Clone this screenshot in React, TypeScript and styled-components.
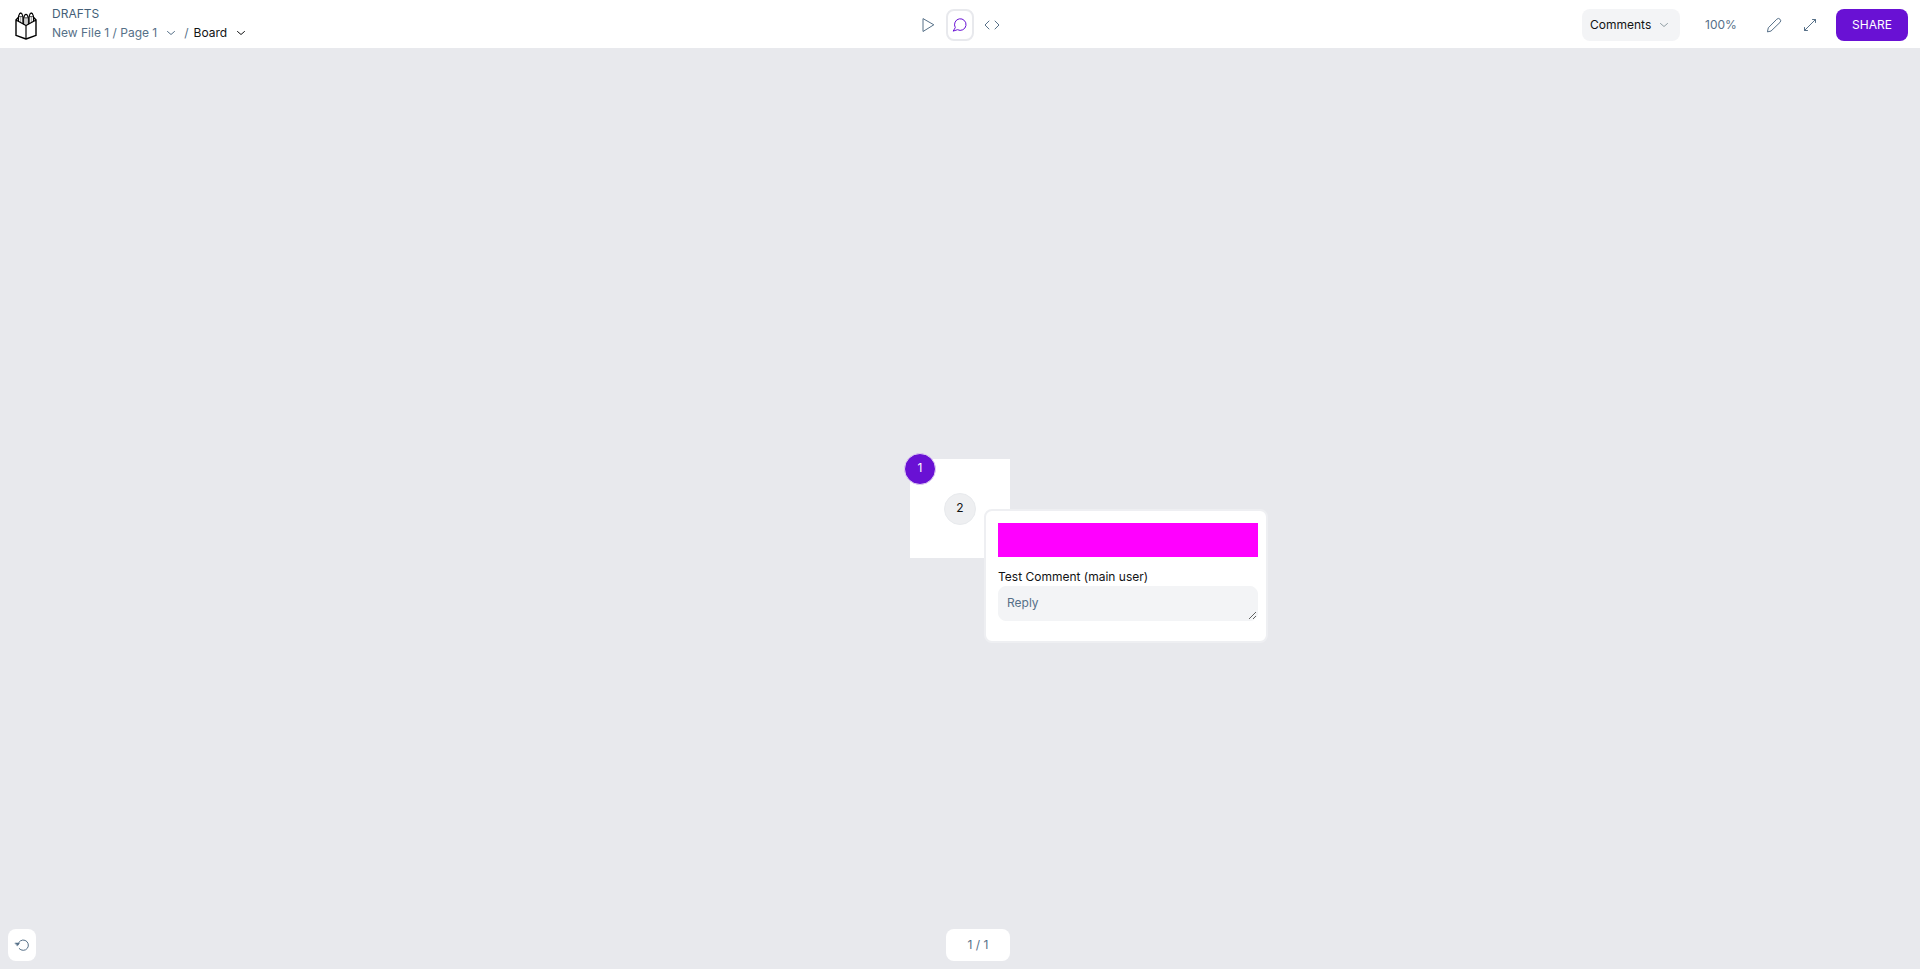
import React from "react";
import styled, { createGlobalStyle, css } from "styled-components";

const color = {
  accent: "#6911d4",
  canvas: "#e8e9ed",
  field: "#f3f4f6",
  line: "#eeeff2",
  text: "#121314",
  muted: "#567088",
};

const GlobalStyle = createGlobalStyle`
  *, *::before, *::after { box-sizing: border-box; }
  body {
    margin: 0;
    font-family: Inter, "Liberation Sans", sans-serif;
    font-size: 12px;
    line-height: 16px;
    color: ${color.text};
  }
  button, select, textarea { font: inherit; color: inherit; margin: 0; }
  button { border: 0; padding: 0; background: none; cursor: pointer; }
`;

const Viewer = styled.div`
  display: flex;
  flex-direction: column;
  min-height: 100vh;
  background: ${color.canvas};
`;

const Header = styled.header`
  display: grid;
  grid-template-columns: 1fr auto 1fr;
  align-items: center;
  min-height: 48px;
  padding: 0 12px;
  background: #fff;
`;

const FileInfo = styled.div`
  display: flex;
  align-items: center;
  gap: 14px;
  padding-left: 2px;
`;

const HomeLink = styled.a`
  display: flex;
  padding-top: 2px;
  color: #000;
`;

const Titles = styled.div`
  display: flex;
  flex-direction: column;
  gap: 3px;
  padding-bottom: 2px;
  color: ${color.muted};
`;

const Project = styled.span`
  color: #445f78;
`;

const Breadcrumb = styled.nav`
  display: flex;
  align-items: center;
  gap: 8px;
`;

const Crumb = styled.button<{ $current?: boolean }>`
  display: flex;
  align-items: center;
  gap: 9px;
  white-space: nowrap;
  color: ${(p) => (p.$current ? color.text : color.muted)};
`;

const CurrentCrumb = styled.div`
  display: flex;
  gap: 5px;
`;

const Modes = styled.div`
  display: flex;
  gap: 4px;
  padding-top: 2px;
`;

const IconButton = styled.button<{ $active?: boolean; $filled?: boolean }>`
  display: flex;
  align-items: center;
  justify-content: center;
  width: 28px;
  height: 32px;
  border: 2px solid transparent;
  border-radius: 8px;
  color: ${color.muted};
  ${(p) => p.$active && css`
    border-color: ${color.canvas};
    color: ${color.accent};
  `}
  ${(p) => p.$filled && css`
    background: #fff;
  `}
`;

const Options = styled.div`
  display: flex;
  align-items: center;
  justify-content: flex-end;
  padding-top: 2px;
`;

const SelectBox = styled.div`
  display: grid;
  align-items: center;
  width: 98px;
  height: 32px;
  color: #8f9da3;
  > * { grid-area: 1 / 1; }
  svg { justify-self: end; margin-right: 11px; pointer-events: none; }
`;

const Select = styled.select`
  appearance: none;
  width: 100%;
  height: 32px;
  padding: 0 24px 0 8px;
  border: 0;
  border-radius: 8px;
  background: ${color.field};
  color: ${color.text};
`;

const Zoom = styled.button`
  width: 80px;
  height: 32px;
  padding-left: 2px;
  color: ${color.muted};
`;

const Tools = styled.div`
  display: flex;
  gap: 8px;
  margin-right: 12px;
`;

const ShareButton = styled.button`
  width: 72px;
  height: 32px;
  border-radius: 8px;
  background: ${color.accent};
  color: #fff;
`;

const Canvas = styled.main`
  position: relative;
  flex: 1;
  display: flex;
  align-items: center;
  justify-content: center;
`;

const Board = styled.section`
  position: relative;
  width: 100px;
  height: 99px;
  background: #fff;
`;

const Bubble = styled.button<{ $x: number; $y: number; $unread?: boolean }>`
  position: absolute;
  left: ${(p) => p.$x}px;
  top: ${(p) => p.$y}px;
  width: 32px;
  height: 32px;
  transform: translate(-50%, -50%);
  border: 1px solid ${(p) => (p.$unread ? "#e1d2f3" : "#e8eaed")};
  border-radius: 50%;
  background: ${(p) => (p.$unread ? color.accent : "#eeeff1")};
  color: ${(p) => (p.$unread ? "#fff" : color.text)};
  padding-bottom: 2px;
`;

const Thread = styled.article`
  position: absolute;
  left: 74px;
  top: 50px;
  width: 284px;
  padding: 12px 8px 20px 12px;
  border: 2px solid ${color.line};
  border-radius: 8px;
  background: #fff;
`;

const Author = styled.div`
  height: 34px;
  background: #f0f;
`;

const Message = styled.p`
  margin: 12px 0 1px;
  white-space: nowrap;
`;

const Reply = styled.textarea`
  display: block;
  width: 100%;
  height: 35px;
  padding: 8px;
  border: 1px solid ${color.field};
  border-radius: 8px;
  background: ${color.field};
  resize: vertical;
  &::placeholder { color: ${color.muted}; opacity: 1; }
`;

const ResetSlot = styled.div`
  position: absolute;
  left: 8px;
  bottom: 8px;
`;

const Pager = styled.div`
  position: absolute;
  left: calc(50% - 14px);
  bottom: 8px;
  display: flex;
  align-items: center;
  justify-content: center;
  width: 64px;
  height: 32px;
  border-radius: 8px;
  background: #fff;
  color: ${color.muted};
`;

const Icon = ({ children, size = 16 }: { children: React.ReactNode; size?: number }) => (
  <svg width={size} height={size} viewBox={`0 0 ${size} ${size}`} fill="none" stroke="currentColor" strokeLinecap="round" strokeLinejoin="round" aria-hidden="true">
    {children}
  </svg>
);

const Chevron = () => (
  <Icon size={10}><path d="M1.500 3.500 5 6.500l3.500-3" /></Icon>
);

const Logo = () => (
  <svg width="24" height="30" viewBox="0 0 24 30" fill="none" stroke="currentColor" strokeWidth="1.400" strokeLinejoin="round" aria-hidden="true">
    <path d="M2 10v15.400L12 29l10-3.600V10l-10 5.500z" />
    <path d="M12 15.500V29" strokeWidth="1.200" />
    <path d="M2 10l2.300-2.500M22 10l-2.300-2.500" />
    <path d="M4.500 11.500V6.200l1.300-2.900h1.800l1.300 2.900v7.600M15.100 13.800V6.200l1.300-2.900h1.800l1.300 2.900v5.300" strokeWidth="1.100" />
    <path d="M9.700 14.200V7.400l1.400-2.900h1.800l1.400 2.900v6.800" strokeWidth="1.100" />
    <path d="M4.500 6.600h4.400M15.100 6.600h4.400M9.700 7.800h4.600" strokeWidth="0.700" />
    <path d="M6.700 7v5M17.300 7v5M12 8v6" strokeWidth="0.400" />
    <path d="M6.200 3.300h1M11.500 4.500h1M16.800 3.300h1" strokeWidth="1.600" />
  </svg>
);

export default function App() {
  return (
    <>
      <GlobalStyle />
      <Viewer>
        <Header>
          <FileInfo>
            <HomeLink href="#" aria-label="Dashboard"><Logo /></HomeLink>
            <Titles>
              <Project>DRAFTS</Project>
              <Breadcrumb aria-label="File">
                <Crumb>New File 1 / Page 1 <Chevron /></Crumb>
                <CurrentCrumb>
                  <span>/</span>
                  <Crumb $current>Board <Chevron /></Crumb>
                </CurrentCrumb>
              </Breadcrumb>
            </Titles>
          </FileInfo>
          <Modes>
            <IconButton aria-label="Play">
              <Icon><path d="M3 2v12.500L13.500 8z" /></Icon>
            </IconButton>
            <IconButton $active aria-label="Comments" aria-pressed="true">
              <Icon><path d="M3.100 10.300A5.800 5.800 0 1 1 5.500 12.700L1.500 14z" /></Icon>
            </IconButton>
            <IconButton aria-label="Inspect code">
              <Icon><path d="M5 4 1 8l4 4M11 4l4 4-4 4" /></Icon>
            </IconButton>
          </Modes>
          <Options>
            <SelectBox>
              <Select aria-label="Comments filter"><option>Comments</option></Select>
              <Chevron />
            </SelectBox>
            <Zoom>100%</Zoom>
            <Tools>
              <IconButton aria-label="Edit">
                <Icon><path d="M1.500 14.500 2.300 10.800 10.800 2.200a2.100 2.100 0 0 1 3.200 3.200L5.300 13.800z" /></Icon>
              </IconButton>
              <IconButton aria-label="Full screen">
                <Icon><path d="M2.500 13.500l11-11M10.500 2.500h3v3M2.500 10.500v3h3" /></Icon>
              </IconButton>
            </Tools>
            <ShareButton>SHARE</ShareButton>
          </Options>
        </Header>
        <Canvas>
          <Board aria-label="Board">
            <Bubble $x={10} $y={10} $unread>1</Bubble>
            <Bubble $x={50} $y={50}>2</Bubble>
            <Thread>
              <Author />
              <Message>Test Comment (main user)</Message>
              <Reply aria-label="Reply" placeholder="Reply" rows={1} />
            </Thread>
          </Board>
          <ResetSlot>
            <IconButton $filled aria-label="Reset">
              <Icon>
                <path d="M4 7.500A5.200 5.200 0 1 1 5.200 11.600" />
                <path d="M1.200 6h4.300L3.500 8.800z" fill="currentColor" strokeWidth="0.500" />
              </Icon>
            </IconButton>
          </ResetSlot>
          <Pager>1 / 1</Pager>
        </Canvas>
      </Viewer>
    </>
  );
}
